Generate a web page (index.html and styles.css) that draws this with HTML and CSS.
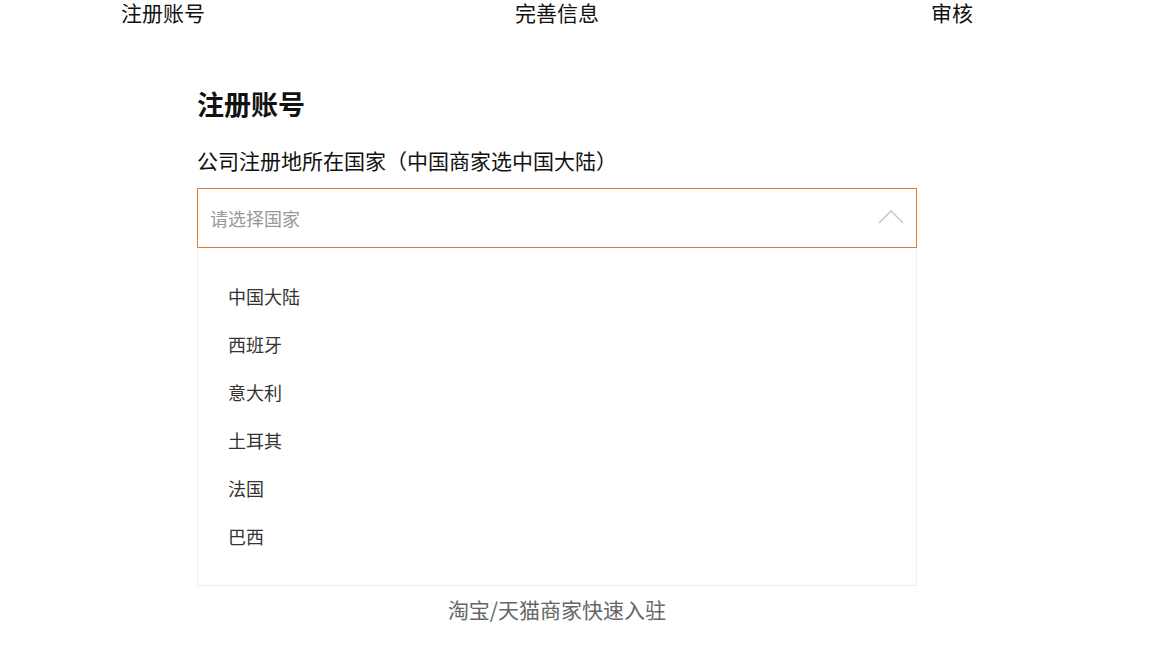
FILE: index.html
```html
<!DOCTYPE html>
<html lang="zh-CN">
<head>
    <meta charset="UTF-8">
    <meta name="viewport" content="width=device-width, initial-scale=1.0">
    <title>注册账号</title>
    <link rel="stylesheet" href="styles.css">
</head>
<body>
    <div class="steps">
        <span class="step">注册账号</span>
        <span class="step">完善信息</span>
        <span class="step">审核</span>
    </div>

    <div class="register">
        <h2>注册账号</h2>
        <label class="field-label">公司注册地所在国家（中国商家选中国大陆）</label>

        <div class="select open">
            <span class="placeholder">请选择国家</span>
            <svg class="arrow" width="26" height="16" viewBox="0 0 26 16">
                <polyline points="1,14 13,2 25,14" fill="none" stroke="#c8c8c8" stroke-width="1.6"/>
            </svg>
        </div>
        <ul class="options">
            <li>中国大陆</li>
            <li>西班牙</li>
            <li>意大利</li>
            <li>土耳其</li>
            <li>法国</li>
            <li>巴西</li>
        </ul>

        <a class="quick-link">淘宝/天猫商家快速入驻</a>
    </div>
</body>
</html>
```

FILE: styles.css
```css
body { margin: 0; font-family: "Noto Sans CJK SC", "Liberation Sans", sans-serif; color: #111; background: #fff; }
.steps {
    display: grid;
    grid-template-columns: 394px 416px auto;
    padding-left: 121px;
    font-size: 21px;
    line-height: 24px;
}
.register { width: 720px; margin-left: 197px; display: flex; flex-direction: column; }
.register h2 { font-size: 27px; font-weight: bold; margin: 62px 0 0; line-height: 36px; }
.field-label { font-size: 21px; line-height: 28px; margin-top: 24px; }
.select {
    margin-top: 14px;
    height: 58px;
    border: 1px solid #e07a32;
    display: flex;
    align-items: center;
    justify-content: space-between;
    padding: 0 12px;
}
.placeholder { font-size: 18px; color: #999; }
.arrow { margin-top: -2px; }
.options {
    list-style: none;
    margin: 0;
    padding: 24px 30px 25px;
    border: 1px solid #eee;
    border-top: none;
}
.options li { font-size: 18px; line-height: 48px; color: #333; }
.quick-link { text-align: center; font-size: 21px; color: #666; margin-top: 9px; line-height: 28px; cursor: pointer; }
```
